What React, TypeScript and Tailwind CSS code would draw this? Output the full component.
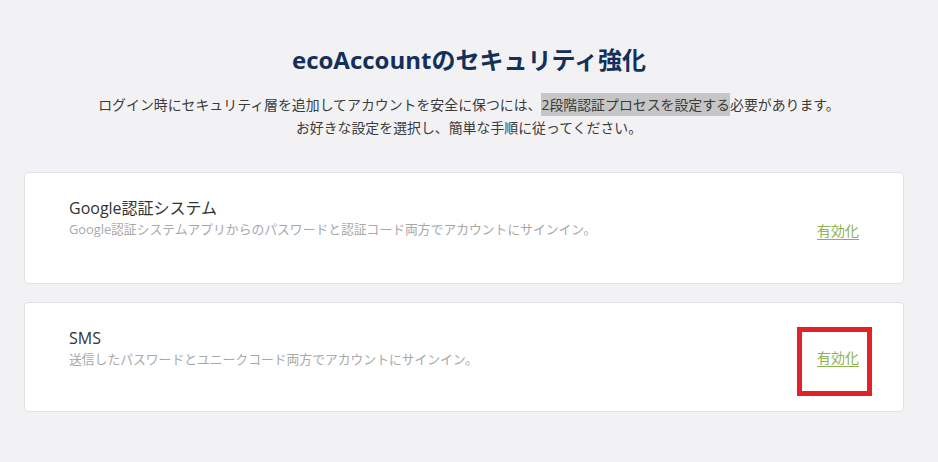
import React from "react";

const jp = { fontFamily: '"Open Sans", "Noto Sans CJK JP", sans-serif' };

function Card({ title, desc, boxed, h }: { title: string; desc: string; boxed?: boolean; h: string }) {
  return (
    <div className={`flex items-start justify-between rounded-[4px] border border-[#e1e1e3] bg-white pl-[44px] pr-[44px] ${h}`}>
      <div className="flex flex-col pt-[24px]">
        <div className="text-[16px] leading-[22px] text-[#333333]">{title}</div>
        <div className="text-[12.8px] leading-[20px] text-[#a8a8a8]">{desc}</div>
      </div>
      <div className={`relative ${boxed ? "mt-[45px]" : "mt-[48px]"}`}>
        <a className="block text-[14px] leading-[20px] text-[#8db24f] underline underline-offset-[3px]">有効化</a>
        {boxed && (
          <div className="absolute left-[-20px] top-[-21px] h-[69px] w-[75px] border-[5px] border-[#e3212b]" />
        )}
      </div>
    </div>
  );
}

export default function App() {
  return (
    <div className="min-h-[462px] w-full bg-[#f2f2f4]" style={jp}>
      <div className="flex flex-col items-center pt-[44px]">
        <h1 className="text-[24px] font-bold leading-[32px] text-[#12305a]">ecoAccountのセキュリティ強化</h1>
        <p className="mt-[17px] text-center text-[13.9px] leading-[23px] text-[#3a3a3a]">
          ログイン時にセキュリティ層を追加してアカウントを安全に保つには、
          <span className="bg-[#c6c6c6] py-[2px]">2段階認証プロセスを設定する</span>
          必要があります。
          <br />
          お好きな設定を選択し、簡単な手順に従ってください。
        </p>
      </div>
      <div className="mx-[24px] mt-[33px] flex flex-col gap-[18px] pr-[10px]">
        <Card
          h="h-[112px]"
          title="Google認証システム"
          desc="Google認証システムアプリからのパスワードと認証コード両方でアカウントにサインイン。"
        />
        <Card h="h-[110px]" title="SMS" desc="送信したパスワードとユニークコード両方でアカウントにサインイン。" boxed />
      </div>
    </div>
  );
}
